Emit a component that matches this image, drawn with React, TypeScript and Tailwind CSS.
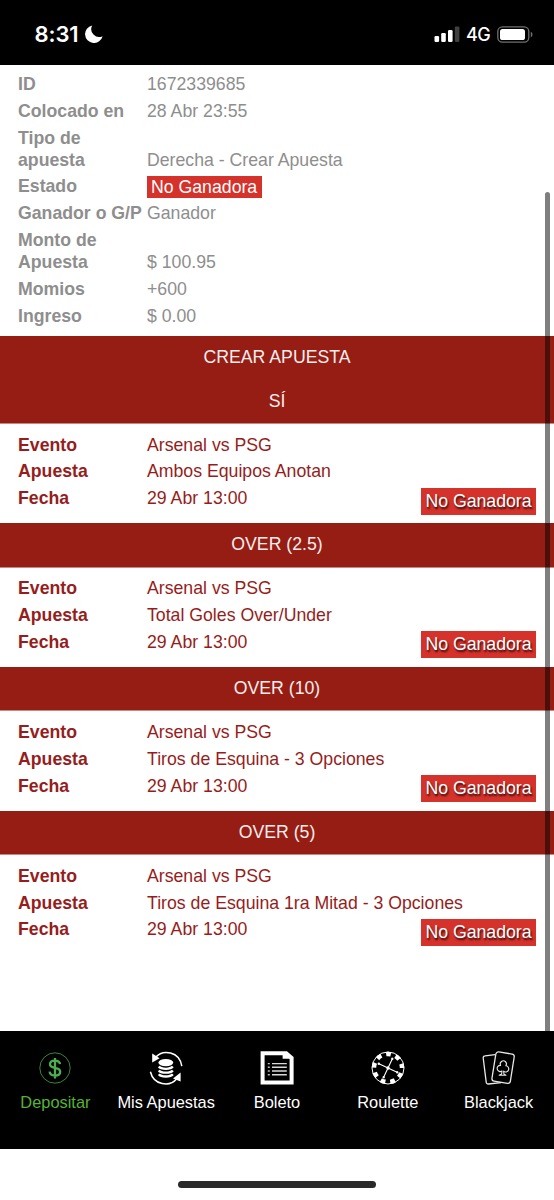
import type { ReactNode } from "react";

type Leg = {
  pick: string;
  event: string;
  market: string;
  date: string;
};

const LEGS: Leg[] = [
  { pick: "SÍ", event: "Arsenal vs PSG", market: "Ambos Equipos Anotan", date: "29 Abr 13:00" },
  { pick: "OVER (2.5)", event: "Arsenal vs PSG", market: "Total Goles Over/Under", date: "29 Abr 13:00" },
  { pick: "OVER (10)", event: "Arsenal vs PSG", market: "Tiros de Esquina - 3 Opciones", date: "29 Abr 13:00" },
  { pick: "OVER (5)", event: "Arsenal vs PSG", market: "Tiros de Esquina 1ra Mitad - 3 Opciones", date: "29 Abr 13:00" },
];

function StatusBar() {
  return (
    <header className="flex h-[65px] shrink-0 items-start justify-between bg-black pl-[34.5px] pr-[21px] text-white">
      <div className="mt-[22px] flex h-6 items-center gap-[5.5px]">
        <span className="w-[45px] whitespace-nowrap font-['Inter',sans-serif] text-[22px] font-semibold leading-6 tracking-[-0.1px]">
          8:31
        </span>
        <svg className="h-[18px] w-[18px]" viewBox="0 0 18 18" fill="currentColor">
          <path d="M7.2.4A8.9 8.9 0 1 0 17.6 11.2 7.9 7.9 0 0 1 7.2.4z" />
        </svg>
      </div>
      <div className="mt-[22px] flex h-6 items-center">
        <svg className="h-4 w-[26px]" viewBox="0 0 26 16" fill="currentColor">
          <rect x="0.5" y="10" width="4.6" height="6" rx="1.2" />
          <rect x="7.2" y="7" width="4.6" height="9" rx="1.2" />
          <rect x="14" y="4" width="4.6" height="12" rx="1.2" />
          <rect x="20.8" y="0.5" width="4.6" height="15.5" rx="1.2" opacity="0.25" />
        </svg>
        <span className="ml-[6px] mt-[2px] w-[25px] whitespace-nowrap font-['Inter',sans-serif] text-[18px] font-medium leading-6 tracking-[-0.6px]">
          4G
        </span>
        <svg className="ml-[6px] h-[17px] w-[36px]" viewBox="0 0 36 17">
          <rect x="0.8" y="0.8" width="31" height="15.4" rx="4.6" fill="none" stroke="#6f6f6f" strokeWidth="1.3" />
          <rect x="3" y="3" width="25" height="11" rx="2.6" fill="#fff" />
          <path d="M33.8 5.8c2.2.6 2.2 4.8 0 5.4z" fill="#6f6f6f" />
        </svg>
      </div>
    </header>
  );
}

function Row({ label, children }: { label: ReactNode; children: ReactNode }) {
  return (
    <div className="flex items-end pb-[4.8px]">
      <div className="w-[129px] shrink-0 whitespace-nowrap font-bold">{label}</div>
      <div className="whitespace-nowrap">{children}</div>
    </div>
  );
}

function LegCard({ leg }: { leg: Leg }) {
  return (
    <section>
      <h2 className="h-[44.25px] border-b border-[#c98983] bg-[#961d14] text-center leading-[42.5px] text-[#fbeeec]">
        {leg.pick}
      </h2>
      <div className="flex h-[99.5px] items-start justify-between px-[18px] pt-[9.75px] text-[#961d1b]">
        <div>
          <Row label="Evento">{leg.event}</Row>
          <Row label="Apuesta">{leg.market}</Row>
          <Row label="Fecha">{leg.date}</Row>
        </div>
        <span className="-ml-20 mt-[54px] h-[27px] w-[115px] whitespace-nowrap bg-[#d4322b] text-center leading-[26px] text-white [text-shadow:1px_2px_2px_rgba(0,0,0,0.8)]">
          No Ganadora
        </span>
      </div>
    </section>
  );
}

function DepositIcon() {
  return (
    <svg className="h-[34px] w-[34px]" viewBox="0 0 34 34" fill="none" stroke="#4caf50">
      <circle cx="17" cy="17" r="15.2" strokeWidth="1" opacity="0.75" />
      <path
        d="M22 13.2c-.3-2.4-2.1-3.6-5-3.6s-5 1.4-5 3.6c0 2.5 2.2 3.1 5 3.7 3 .6 5.2 1.4 5.2 3.9 0 2.3-2.1 3.8-5.2 3.8s-5.1-1.4-5.4-3.9M17 7v20.4"
        strokeWidth="2.3"
      />
    </svg>
  );
}

function BetsIcon() {
  return (
    <svg className="h-[34px] w-[34px]" viewBox="0 0 34 34" fill="none" stroke="#fff" strokeWidth="1.5">
      <path d="M6.4 6.4C14-2 30.5.4 32.8 15.2" />
      <path d="M1.4 20.8C4.6 34 20.4 36.8 28 27.6" />
      <path d="M3.2 2.6v9l7.4-4.4z" fill="#fff" stroke="none" />
      <path d="M31.6 21.6v9l-7.6-3z" fill="#fff" stroke="none" />
      <ellipse cx="16.8" cy="11.6" rx="7.4" ry="3.6" fill="#fff" stroke="none" />
      <path
        d="M9.8 15.6c2.4 3 11.6 3 14 0M9.8 19.4c2.4 3 11.6 3 14 0M9.8 23.2c2.4 3 11.6 3 14 0"
        strokeWidth="2.4"
      />
    </svg>
  );
}

function TicketIcon() {
  return (
    <svg className="h-[34px] w-[34px]" viewBox="0 0 34 34" fill="none" stroke="#fff">
      <path d="M2.6 2.2h23.6l5.4 4.8v24.6h-29z" strokeWidth="4" />
      <path d="M22.6 1v6.8H33L26 1z" fill="#fff" stroke="none" />
      <path d="M12 12.6h14.8M12 16.3h14.8M12 20h14.8M12 23.7h14.8" strokeWidth="1.4" opacity="0.85" />
      <path d="M7.8 12.6h2M7.8 16.3h2M7.8 20h2M7.8 23.7h2" strokeWidth="1.4" opacity="0.75" />
    </svg>
  );
}

function RouletteIcon() {
  return (
    <svg className="h-[34px] w-[34px]" viewBox="0 0 34 34" fill="none" stroke="#fff">
      <circle cx="17" cy="17" r="16" strokeWidth="1" />
      {/* nine pockets round the rim */}
      <circle cx="17" cy="17" r="14" strokeWidth="4.4" strokeDasharray="4.8 4.974" strokeDashoffset="-5" />
      <g transform="rotate(25 17 17)" strokeWidth="1.1">
        <path d="M17 6.4v21.2M6.4 17h21.2" />
        <circle cx="17" cy="17" r="1.7" fill="#fff" stroke="none" />
        <g fill="#fff" stroke="none">
          <circle cx="17" cy="6.8" r="1.2" />
          <circle cx="17" cy="27.2" r="1.2" />
          <circle cx="6.8" cy="17" r="1.2" />
          <circle cx="27.2" cy="17" r="1.2" />
        </g>
      </g>
    </svg>
  );
}

function CardsIcon() {
  return (
    <svg className="h-[34px] w-[34px]" viewBox="0 0 34 34" fill="none" stroke="#e8e8e8" strokeWidth="1.3" strokeLinejoin="round">
      <path d="M13 3.6 3 4.8A2 2 0 0 0 1.2 7l3 24.2a2 2 0 0 0 2.2 1.8l12.8-1.4" />
      <rect x="11.8" y="1.8" width="18.6" height="29.6" rx="2.6" transform="rotate(9 21 16.6)" />
      <path
        d="M18.6 14.4a3.1 3.1 0 1 1 5.2.4 3.1 3.1 0 1 1-2.2 5.4l.4 3 2 1.1h-6.8l2.4-1.3.4-3a3.1 3.1 0 1 1-1.4-5.6z"
        strokeWidth="1.1"
      />
    </svg>
  );
}

const NAV = [
  { label: "Depositar", icon: <DepositIcon />, active: true },
  { label: "Mis Apuestas", icon: <BetsIcon /> },
  { label: "Boleto", icon: <TicketIcon /> },
  { label: "Roulette", icon: <RouletteIcon /> },
  { label: "Blackjack", icon: <CardsIcon /> },
];

export default function App() {
  return (
    <div className="flex h-[1200px] w-[554px] flex-col overflow-hidden bg-white font-['Liberation_Sans',Arial,sans-serif] text-[17.7px] leading-[22px]">
      <StatusBar />

      <main className="relative h-[966px] shrink-0">
        {/* slip summary */}
        <div className="h-[271.25px] pl-[18px] pt-[8px] text-[#8e8e8e]">
          <Row label="ID">1672339685</Row>
          <Row label="Colocado en">28 Abr 23:55</Row>
          <Row label={<>Tipo de<br />apuesta</>}>Derecha - Crear Apuesta</Row>
          <Row label="Estado">
            <span className="-mb-px block w-[115px] bg-[#d4322b] px-1 text-white">No Ganadora</span>
          </Row>
          <Row label="Ganador o G/P">Ganador</Row>
          <Row label={<>Monto de<br />Apuesta</>}>$ 100.95</Row>
          <Row label="Momios">+600</Row>
          <Row label="Ingreso">$ 0.00</Row>
        </div>

        <h1 className="h-[43.25px] bg-[#961d14] text-center leading-[43px] text-[#fbeeec]">CREAR APUESTA</h1>
        {LEGS.map((leg) => (
          <LegCard key={leg.pick} leg={leg} />
        ))}

        {/* scroll thumb */}
        <div className="absolute bottom-0 right-1 top-[127px] w-[5px] rounded-t-full bg-black/50" />
      </main>

      <nav className="grid h-[118px] shrink-0 grid-cols-5 bg-black pt-5 text-white">
        {NAV.map((item) => (
          <a key={item.label} className="flex flex-col items-center">
            {item.icon}
            <span
              className={
                item.active
                  ? "mt-[6px] whitespace-nowrap text-[16.4px] text-[#55b435]"
                  : "mt-[6px] whitespace-nowrap text-[16.4px]"
              }
            >
              {item.label}
            </span>
          </a>
        ))}
      </nav>

      <div className="flex flex-1 items-end justify-center pb-3">
        <div className="h-[7px] w-[198px] rounded-full bg-[#2a2a2a]" />
      </div>
    </div>
  );
}
